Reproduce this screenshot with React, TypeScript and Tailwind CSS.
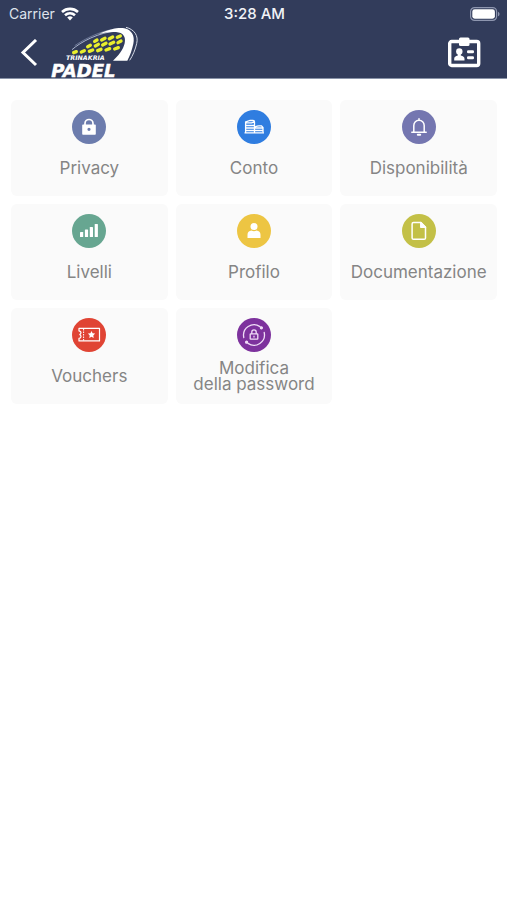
import type { ReactNode } from "react";

function PadelLogo() {
  return (
    <svg viewBox="0 0 270 162" className="h-[54px] w-[90px]" role="img" aria-label="Trinakria Padel">
      <path d="M66 71C92 48 145 19 205 14" fill="none" stroke="#aab4cc" strokeWidth="3" />
      <path d="M74 59C108 36 153 15 196 9" fill="none" stroke="#8792b3" strokeWidth="2" />
      <path d="M146 24C180 9 205 4 223 7c23 5 32 24 27 46-4 18-10 36-18 51h-43c16-14 31-33 35-52 4-20-4-32-26-34-18-1-36 2-52 6z" fill="#fff" />
      <path d="M228 4c25 6 38 25 32 49-4 17-11 35-21 50" fill="none" stroke="#d5dae6" strokeWidth="3" />
      <g stroke="#e9ee2c" strokeWidth="10" strokeLinecap="round">
        <path d="M71 80l8-3M94 78l9-4M118 76l10-4M143 74l10-4M168 72l11-4M194 69l11-4" />
        <path d="M113 62l8-4M136 60l9-5M158 57l10-5M180 54l11-5M204 50l9-5" />
        <path d="M134 46l7-4M155 42l10-5M178 38l10-5M202 34l9-4" />
      </g>
      <text x="48" y="102" fill="#fff" fontFamily="DejaVu Sans, sans-serif" fontSize="19" fontWeight="700" fontStyle="italic">TRINAKRIA</text>
      <text x="4" y="152" fill="#fff" stroke="#fff" strokeWidth="1.500" fontFamily="DejaVu Sans, sans-serif" fontSize="54" fontWeight="700" fontStyle="italic">PADEL</text>
    </svg>
  );
}

function StatusBar() {
  return (
    <div className="grid h-7 grid-cols-3 items-center pr-[7px] pl-[9px] text-sm">
      <div className="flex items-center gap-[6px] text-[#dfe3ec]">
        <span>Carrier</span>
        <svg viewBox="0 0 18 14" className="h-[14px] w-[18px]" fill="none" stroke="#fff" strokeWidth="2.6" aria-hidden="true">
          <path d="M1 5c4.600-4.200 11.400-4.200 16 0M4 8.300c3-2.700 7-2.700 10 0" />
          <path d="M6.200 10.400c1.700-1.500 3.900-1.500 5.600 0L9 13.400z" fill="#fff" stroke="none" />
        </svg>
      </div>
      <span className="text-center text-[15px] font-medium text-[#f1f3f7]">3:28 AM</span>
      <svg viewBox="0 0 30 14" className="h-[14px] w-[30px] justify-self-end" aria-hidden="true">
        <rect x="0.600" y="0.600" width="26" height="12.800" rx="4" fill="none" stroke="#8e96af" strokeWidth="1.200" />
        <rect x="2.300" y="2.300" width="22.600" height="9.400" rx="2.400" fill="#fff" />
        <path d="M28 4.700c2 .8 2 3.800 0 4.600z" fill="#8e96af" />
      </svg>
    </div>
  );
}

type Item = { label: string; color: string; icon: ReactNode };

const items: Item[] = [
  {
    label: "Privacy",
    color: "bg-[#6c7cad]",
    icon: (
      <>
        <path d="M13 16v-2.500a4 4 0 0 1 8 0V16" fill="none" stroke="#fff" strokeWidth="1.700" />
        <path fillRule="evenodd" fill="#fff" d="M11 14.500h12a.8.8 0 0 1 .8.8v8.700a.8.8 0 0 1-.8.8H11a.8.8 0 0 1-.8-.8v-8.700a.8.8 0 0 1 .8-.8zm6 3.200a1.600 1.600 0 1 0 0 3.200 1.600 1.600 0 0 0 0-3.200z" />
      </>
    ),
  },
  {
    label: "Conto",
    color: "bg-[#2f7de0]",
    icon: (
      <g fill="none" stroke="#fff" strokeWidth="1.300">
        <path d="M7.500 22.800h19.500M8.600 22.500V12l4.500-1.500h3c1 0 1.400.6 1.400 1.500v10.500M8.600 12.800h6l2.800-1M8.600 15.500h8.500M8.600 18h8.500M8.600 20.500h8.500" />
        <path d="M17.500 17c2-.8 3-1.200 4.500-1.200h2.500l1.500 1.800v5M17.500 18h8.500M17.500 20.500h8.500" />
      </g>
    ),
  },
  {
    label: "Disponibilità",
    color: "bg-[#7476b0]",
    icon: (
      <g fill="none" stroke="#fff" strokeWidth="1.500" strokeLinecap="round" strokeLinejoin="round">
        <path d="M17 8.800v1.400M9.800 22.300h14.400M11.800 22.300V15.500a5.200 5.200 0 0 1 10.400 0v6.800" />
        <path d="M15.800 24.700h2.400" strokeWidth="2" />
      </g>
    ),
  },
  {
    label: "Livelli",
    color: "bg-[#67a691]",
    icon: (
      <g fill="#fff">
        <rect x="8" y="18" width="3.200" height="5" rx=".6" />
        <rect x="12.900" y="15.500" width="3.200" height="7.500" rx=".6" />
        <rect x="17.800" y="13" width="3.200" height="10" rx=".6" />
        <rect x="22.700" y="10" width="3.200" height="13" rx=".6" />
      </g>
    ),
  },
  {
    label: "Profilo",
    color: "bg-[#edc543]",
    icon: (
      <g fill="#fff">
        <circle cx="17" cy="12.600" r="3.500" />
        <path d="M10.500 24v-3.200c0-2.500 1.500-4 4-4.300 1.500 1 3.500 1 5 0 2.500.3 4 1.800 4 4.300V24z" />
      </g>
    ),
  },
  {
    label: "Documentazione",
    color: "bg-[#c3c047]",
    icon: (
      <g stroke="#fff" strokeWidth="1.500" strokeLinejoin="round">
        <path fill="none" d="M11.500 8.500h7.300l4.700 4.800v10.600c0 .8-.6 1.400-1.400 1.400H11.500c-.8 0-1.400-.6-1.400-1.400V9.900c0-.8.6-1.400 1.400-1.400z" />
        <path fill="#fff" d="M18.800 8.500v4.800h4.700z" />
      </g>
    ),
  },
  {
    label: "Vouchers",
    color: "bg-[#e04434]",
    icon: (
      <>
        <path d="M7 10.300h20.500v12.600H7v-2.500c2.500-.5 2.500-2.600.8-3.800 1.700-1.200 1.700-3.300-.8-3.800z" fill="none" stroke="#fff" strokeWidth="1.200" strokeLinejoin="round" />
        <path d="M11.600 11v12" stroke="#fff" strokeWidth="1" strokeDasharray="1.500 1" />
        <path d="M19.500 13l1.100 2.300 2.500.3-1.800 1.800.4 2.500-2.200-1.200-2.200 1.200.4-2.500-1.800-1.800 2.500-.3z" fill="#fff" />
      </>
    ),
  },
  {
    label: "Modifica\ndella password",
    color: "bg-[#7d329d]",
    icon: (
      <g fill="none" stroke="#f0ddf7" strokeWidth="1.300" strokeLinecap="round">
        <path d="M6.800 19.500A10.500 10.500 0 0 1 23 8.600M27.200 14.500A10.500 10.500 0 0 1 11 25.400" />
        <circle cx="24.400" cy="9.800" r="1" fill="#f0ddf7" />
        <circle cx="9.600" cy="24.200" r="1" fill="#f0ddf7" />
        <rect x="13.200" y="15.800" width="7.600" height="5.400" rx=".5" />
        <path d="M14.800 15.600V14a2.200 2.200 0 0 1 4.400 0v1.600M17 18.200v.8" />
      </g>
    ),
  },
];

export default function App() {
  return (
    <div className="min-h-screen bg-white font-['Inter','Liberation_Sans',sans-serif]">
      <header className="border-b border-[#8993a8] bg-[#323c5b]">
        <StatusBar />
        <div className="flex h-[50px] items-center pr-[26px] pl-5">
          <button type="button" aria-label="Indietro">
            <svg viewBox="0 0 18 28" className="h-7 w-[18px]" fill="none" stroke="#fff" strokeWidth="3">
              <path d="M16 1L3 13.500l13 12.500" />
            </svg>
          </button>
          <div className="ml-3 shrink-0">
            <PadelLogo />
          </div>
          <button type="button" aria-label="Tessera" className="ml-auto">
            <svg viewBox="0 0 34 32" className="h-8 w-[34px]" fill="#fff">
              <rect x="2.700" y="4.500" width="29" height="24" rx="2" fill="none" stroke="#fff" strokeWidth="3.400" />
              <rect x="12" y="0.500" width="10.500" height="8.500" rx="1.500" />
              <circle cx="12.300" cy="14.500" r="3.200" />
              <path d="M10.800 16.500h3v2c2.300.6 3.700 1.500 3.700 3.200v1.700H7.200v-1.700c0-1.700 1.400-2.600 3.600-3.200z" />
              <rect x="20" y="13.200" width="7" height="3" rx="1.300" />
              <rect x="20" y="19.200" width="7" height="3" rx="1.300" />
            </svg>
          </button>
        </div>
      </header>
      <main className="grid grid-cols-3 gap-2 pt-[21px] pr-[10px] pl-[11px]">
        {items.map((item) => (
          <button
            key={item.label}
            type="button"
            className="flex h-24 flex-col items-center gap-2 rounded-md bg-[#fafafa] pt-[10px]"
          >
            <span className={`size-[34px] shrink-0 rounded-full ${item.color}`}>
              <svg viewBox="0 0 34 34" className="size-[34px]" aria-hidden="true">
                {item.icon}
              </svg>
            </span>
            <span className="flex h-8 items-center text-center text-[17px] leading-4 whitespace-pre text-[#858585]">
              {item.label}
            </span>
          </button>
        ))}
      </main>
    </div>
  );
}
